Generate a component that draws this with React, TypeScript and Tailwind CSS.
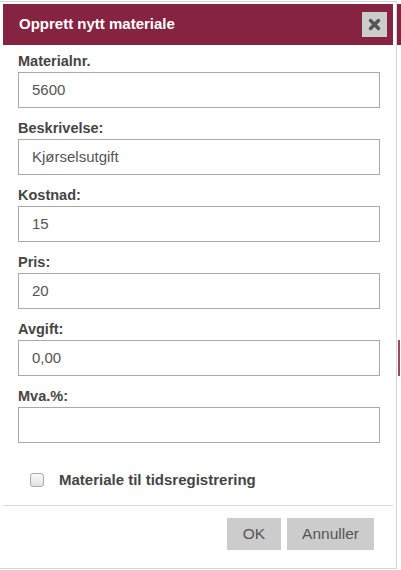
import React from "react";

const fields = [
  { label: "Materialnr.", value: "5600" },
  { label: "Beskrivelse:", value: "Kjørselsutgift" },
  { label: "Kostnad:", value: "15" },
  { label: "Pris:", value: "20" },
  { label: "Avgift:", value: "0,00" },
  { label: "Mva.%:", value: "" },
];

export default function App() {
  return (
    <div
      className="relative w-[401px] h-[570px] bg-white overflow-hidden"
      style={{ fontFamily: '"Liberation Sans", Arial, sans-serif' }}
    >
      {/* page behind the dialog, visible at the right edge */}
      <div className="absolute right-0 top-[4px] w-[4px] h-[41px] bg-[#862341]" />
      <div className="absolute right-[1px] top-[340px] w-[2px] h-[36px] bg-[#9a4a62]" />

      {/* dialog */}
      <div className="absolute left-[-1px] top-[1px] w-[398px] h-[568px] border border-[#d6d6d6] bg-white p-[3px] pt-[2px] flex flex-col">
        <div className="h-[41px] bg-[#862341] flex items-center justify-between pl-[16px] pr-[6px] shrink-0">
          <span className="text-white font-bold text-[15px]">Opprett nytt materiale</span>
          <button className="w-[25px] h-[25px] bg-[#cccccc] flex items-center justify-center">
            <svg width="13" height="13" viewBox="0 0 13 13">
              <path d="M2.5 2.5 L10.5 10.5 M10.5 2.5 L2.5 10.5" stroke="#555" strokeWidth="3.4" strokeLinecap="round" />
            </svg>
          </button>
        </div>

        <div className="flex flex-col pl-[15px] pr-[13px] pt-[7px]">
          {fields.map((f) => (
            <div key={f.label} className="flex flex-col mb-[11px]">
              <label className="text-[14.5px] font-bold text-[#454545] leading-[18px] h-[18px] mb-[2px]">
                {f.label}
              </label>
              <div className="h-[36px] border border-[#a9a9a9] flex items-center px-[13px] text-[15px] text-[#555]">
                {f.value}
              </div>
            </div>
          ))}
        </div>

        <div className="flex items-center pl-[27px] mt-[18px] h-[16px]">
          <span className="w-[14px] h-[14px] rounded-[3px] border border-[#aaa] bg-gradient-to-b from-[#fafafa] to-[#e2e2e2]" />
          <span className="ml-[15px] text-[15px] font-bold text-[#454545]">
            Materiale til tidsregistrering
          </span>
        </div>

        <div className="mt-[17px] border-t border-[#dcdcdc]" />

        <div className="flex justify-end gap-[6px] pr-[19px] pt-[12px]">
          <button className="w-[54px] h-[32px] bg-[#cccccc] text-[#555] text-[15.5px]">OK</button>
          <button className="w-[87px] h-[32px] bg-[#cccccc] text-[#555] text-[15.5px]">Annuller</button>
        </div>
      </div>
    </div>
  );
}
